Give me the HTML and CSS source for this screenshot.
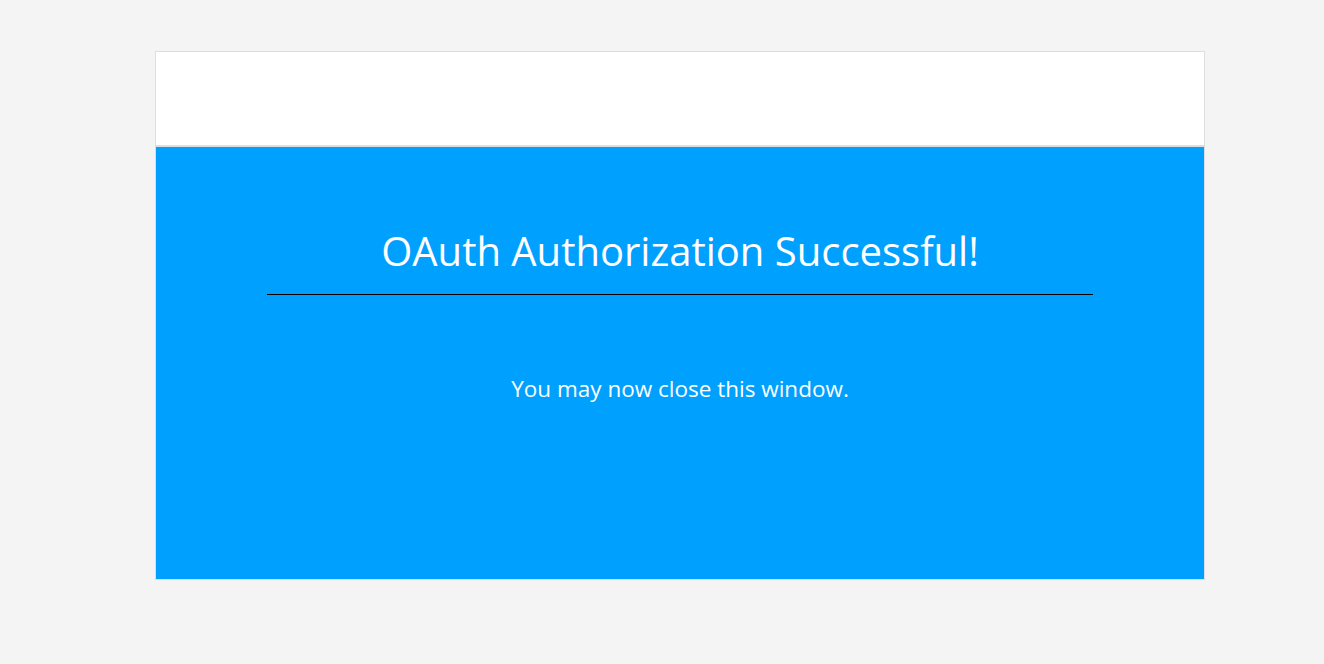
FILE: index.html
```html
<!DOCTYPE html>
<html>
<head>
<meta charset="utf-8">
<link rel="stylesheet" href="styles.css">
<title>OAuth</title>
</head>
<body>
<div class="card">
  <div class="card-header"></div>
  <div class="card-body">
    <h1 class="title">OAuth Authorization Successful!</h1>
    <hr class="rule">
    <p class="message">You may now close this window.</p>
  </div>
</div>
</body>
</html>
```
FILE: styles.css
```css
html, body {
  margin: 0;
  padding: 0;
  background: #f4f4f4;
  font-family: "Open Sans", "Noto Sans", sans-serif;
}
body {
  padding: 51px 0 0 155px;
}
.card {
  width: 1048px;
  border: 1px solid #dddddd;
  background: #ffffff;
}
.card-header {
  height: 93px;
  border-bottom: 2px solid #dddddd;
}
.card-body {
  background: #00a0ff;
  height: 432px;
  display: flex;
  flex-direction: column;
  align-items: center;
  padding-top: 1px;
  box-sizing: border-box;
}
.title {
  margin: 78px 0 0 0;
  color: #ffffff;
  font-weight: 400;
  font-size: 40px;
  line-height: 50px;
}
.rule {
  width: 826px;
  margin: 18px 0 0 0;
  border: 0;
  border-top: 1px solid #000000;
  height: 0;
}
.message {
  margin: 79px 0 0 0;
  color: #ffffff;
  font-size: 22.5px;
  line-height: 30px;
}
```
